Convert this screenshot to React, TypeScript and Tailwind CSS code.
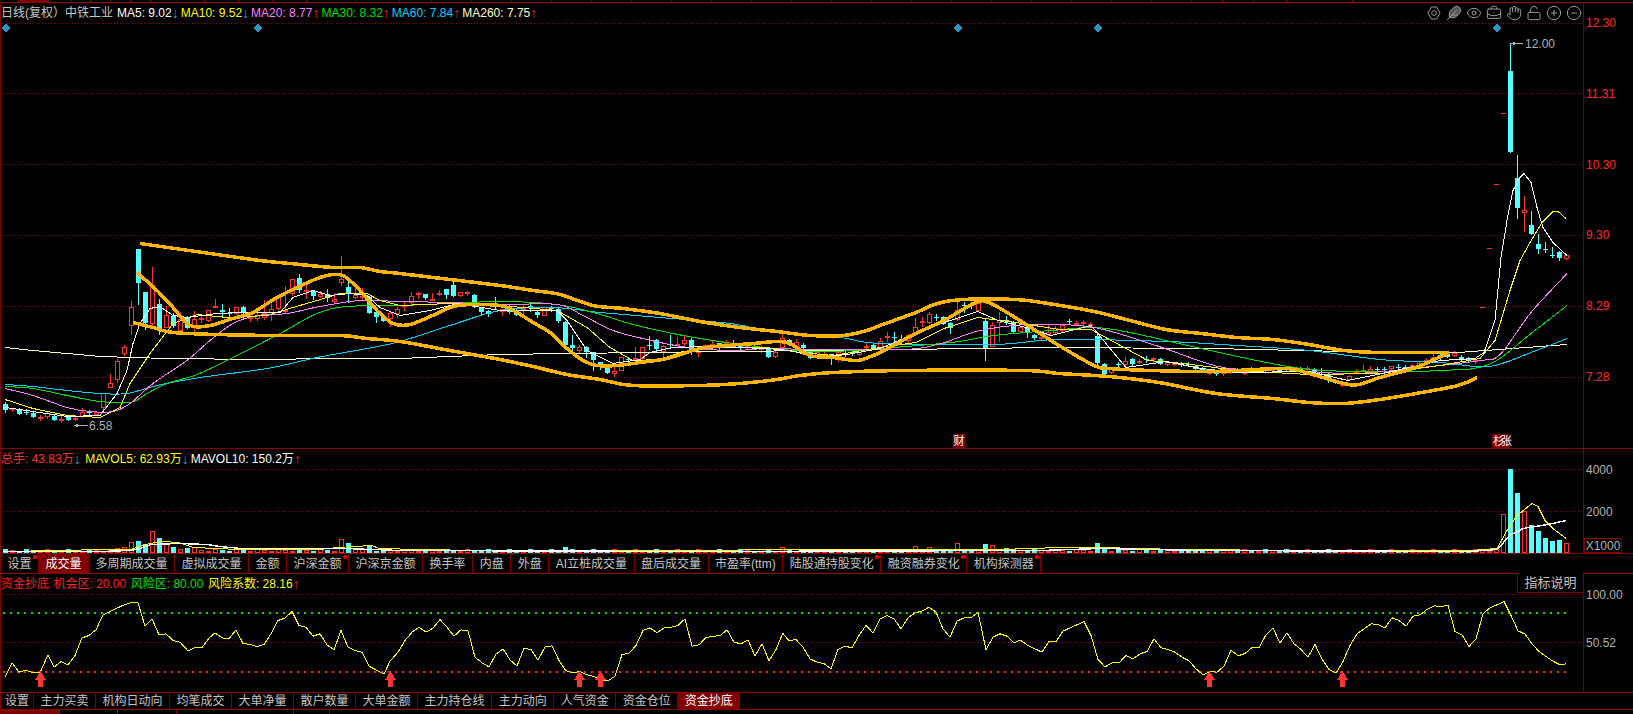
import { Feather, Eye, BriefcaseBusiness, Hand, LockOpen, CirclePlus, CircleMinus } from "lucide-react";

const W = 1582;
const GOLD = "#ffb400";
const RED = "#ff3232";
const CYAN = "#54ffff";
const DOT = "#8a0000";

// [index, body top, body bottom, high, low, up?]
const CANDLES: number[][] = [
  [0,404,410,402,413,0],[1,408,410,408,412,1],[2,409,414,408,415,0],[3,412,413,409,415,0],[4,413,417,412,418,0],
  [5,417,419,415,421,1],[6,413,417,412,419,1],[7,416,420,415,421,0],[8,419,420,416,423,1],[9,417,420,416,421,0],
  [10,418,420,415,421,1],[11,412,417,408,418,1],[12,412,413,410,416,0],[13,412,415,412,416,1],[14,393,408,393,410,1],
  [15,383,388,374,388,1],[16,361,380,359,383,1],[17,347,354,345,356,1],[18,307,326,301,335,1],[19,249,283,249,305,0],
  [20,292,323,292,330,0],[21,285,324,267,328,1],[22,304,328,299,335,0],[23,315,328,306,328,1],[24,316,326,313,328,0],
  [25,319,331,312,331,1],[26,317,328,316,329,0],[27,319,328,311,335,1],[28,318,320,314,323,1],[29,310,321,310,322,1],
  [30,306,308,299,308,1],[31,310,312,304,317,0],[32,313,314,308,317,0],[33,307,314,307,315,1],[34,307,313,306,315,0],
  [35,317,319,314,322,1],[36,315,319,313,321,1],[37,313,318,300,320,1],[38,309,313,303,321,1],[39,297,309,296,310,1],
  [40,310,311,286,313,1],[41,279,294,279,296,1],[42,278,290,274,293,0],[43,290,291,285,299,1],[44,291,296,290,300,0],
  [45,294,297,291,298,1],[46,294,298,289,302,0],[47,299,302,293,303,1],[48,279,283,256,286,1],[49,287,293,282,303,0],
  [50,295,298,288,299,1],[51,296,297,288,300,1],[52,297,313,296,314,0],[53,312,317,311,323,0],[54,317,321,316,322,0],
  [55,313,319,312,327,1],[56,309,314,307,318,1],[57,305,307,302,311,1],[58,296,303,292,305,1],[59,293,294,292,299,1],
  [60,294,298,294,300,0],[61,299,300,293,301,1],[62,293,294,290,296,1],[63,289,295,289,299,0],[64,285,296,281,297,0],
  [65,292,296,292,297,1],[66,292,293,291,296,1],[67,295,307,294,308,0],[68,308,312,307,315,0],[69,311,314,310,317,0],
  [70,304,305,297,310,0],[71,309,312,309,316,1],[72,309,312,304,314,0],[73,310,315,308,316,0],[74,308,310,305,314,1],
  [75,306,307,304,312,0],[76,312,315,310,318,0],[77,307,316,307,316,1],[78,308,309,306,312,0],[79,309,321,307,323,0],
  [80,322,345,321,349,0],[81,345,348,335,355,0],[82,347,351,345,353,1],[83,347,352,346,358,0],[84,352,360,352,371,0],
  [85,362,365,362,370,0],[86,365,373,365,374,0],[87,371,374,367,377,1],[88,357,371,357,371,1],[89,359,360,358,362,0],
  [90,358,359,347,362,1],[91,347,359,347,362,1],[92,345,346,336,350,0],[93,340,349,339,351,0],[94,346,352,345,357,1],
  [95,344,345,335,348,0],[96,344,345,337,345,1],[97,340,344,335,347,1],[98,340,351,338,355,0],[99,351,352,348,357,1],
  [100,345,348,344,349,1],[101,344,346,340,350,1],[102,343,346,343,352,0],[103,342,344,340,348,1],[104,343,345,340,348,0],
  [105,346,347,345,350,0],[106,345,347,343,349,1],[107,346,349,345,350,0],[108,347,350,345,353,1],[109,348,357,347,358,0],
  [110,352,357,351,358,1],[111,338,348,333,350,1],[112,340,345,339,346,0],[113,342,348,339,350,1],[114,345,348,343,351,0],
  [115,349,358,349,359,0],[116,352,357,351,358,1],[117,355,358,352,359,1],[118,354,359,354,365,0],[119,352,357,352,362,1],
  [120,353,354,350,357,0],[121,352,353,350,356,0],[122,350,355,349,356,1],[123,346,348,343,349,1],[124,345,348,344,349,0],
  [125,341,348,338,350,1],[126,336,337,332,342,1],[127,337,338,332,342,0],[128,339,341,335,344,0],[129,335,341,334,343,1],
  [130,327,333,318,334,1],[131,321,322,317,327,1],[132,314,323,312,324,1],[133,317,318,314,321,0],[134,317,324,316,325,0],
  [135,323,328,322,334,0],[136,310,320,302,321,1],[137,305,306,302,313,0],[138,305,306,302,309,0],[139,303,311,303,312,1],
  [140,321,348,318,361,0],[141,325,347,322,347,1],[142,320,323,312,342,1],[143,320,321,316,325,0],[144,322,332,321,333,0],
  [145,327,332,326,333,1],[146,328,333,327,338,0],[147,335,338,334,340,0],[148,337,338,334,341,1],[149,332,335,325,336,1],
  [150,328,333,326,334,1],[151,325,331,324,332,1],[152,321,322,319,325,0],[153,323,324,321,326,1],[154,322,323,320,326,1],
  [155,324,325,322,327,1],[156,336,363,333,368,0],[157,364,374,363,375,0],[158,369,373,368,374,1],[159,364,365,362,367,0],
  [160,361,365,357,366,1],[161,359,364,358,367,0],[162,361,362,359,364,1],[163,359,360,356,363,0],[164,358,359,357,363,1],
  [165,359,364,358,365,0],[166,362,365,361,366,1],[167,363,365,362,366,1],[168,364,365,362,367,0],[169,364,365,362,367,0],
  [170,366,369,365,370,0],[171,368,370,367,372,0],[172,371,374,370,375,1],[173,373,374,371,376,0],[174,372,373,370,376,1],
  [175,370,373,369,374,1],[176,370,372,368,373,0],[177,371,374,370,375,1],[178,369,370,367,372,0],[179,370,371,368,373,1],
  [180,369,370,367,373,0],[181,369,371,367,372,1],[182,370,371,368,372,0],[183,369,370,367,372,0],[184,368,370,367,372,1],
  [185,369,370,367,371,0],[186,368,369,366,371,1],[187,369,371,368,373,0],[188,370,371,368,374,0],[189,374,380,373,383,0],
  [190,380,383,379,384,0],[191,383,386,382,387,1],[192,376,380,375,381,1],[193,372,373,369,374,1],[194,370,371,365,372,1],
  [195,369,372,366,372,1],[196,369,370,367,373,0],[197,369,370,367,372,0],[198,366,369,366,371,1],[199,367,368,364,371,0],
  [200,367,368,365,370,0],[201,365,368,364,369,1],[202,363,366,362,367,1],[203,360,362,358,364,1],[204,357,358,354,362,1],
  [205,355,356,353,360,0],[206,354,357,352,358,0],[207,353,356,351,357,1],[208,357,360,355,361,0],[209,359,361,357,363,0],
  [210,360,362,358,364,1],[211,307,307,307,307,1],[212,248,248,248,248,1],[213,184,184,184,184,1],[214,113,113,113,113,1],
  [215,71,152,43,153,0],[216,178,208,155,219,0],[217,210,213,196,232,1],[218,225,234,211,235,0],[219,244,249,234,254,0],
  [220,249,250,242,253,0],[221,255,256,247,258,0],[222,252,258,251,261,0],[223,255,259,254,260,1],
];

const UPPER = [140,243, 203,252, 260,260, 290,263, 333,267, 360,267, 380,271, 400,273, 450,279, 500,285, 533,290, 560,294, 593,305, 623,308, 660,313, 700,321, 740,327, 777,331, 810,335, 843,335, 867,330, 880,325, 916,312, 937,303, 962,299, 1016,299, 1048,303, 1094,311, 1130,320, 1166,329, 1201,333, 1237,337, 1273,339, 1309,344, 1344,350, 1380,352, 1449,352];
const MIDDLE = [137,272, 157,290, 173,307, 190,325, 210,325, 233,318, 253,312, 277,297, 310,281, 327,275, 343,275, 360,290, 377,310, 393,323, 410,324, 435,314, 458,305, 500,305, 517,312, 533,322, 550,332, 567,348, 583,360, 597,365, 617,365, 640,362, 667,358, 700,348, 727,345, 753,343, 777,341, 790,343, 810,355, 833,357, 857,360, 873,355, 880,352, 916,333, 944,320, 976,302, 991,303, 1023,322, 1059,345, 1094,365, 1109,368, 1151,370, 1212,371, 1284,368, 1309,373, 1344,383, 1359,384, 1380,377, 1416,367, 1449,352];
const LOWER = [133,322, 153,327, 173,332, 217,334, 277,335, 340,335, 367,338, 400,341, 450,350, 500,359, 533,366, 567,374, 600,379, 633,385, 700,385, 740,383, 777,379, 800,375, 833,372, 900,370, 1023,370, 1059,373, 1109,376, 1159,382, 1216,393, 1273,398, 1309,402, 1344,403, 1380,399, 1416,393, 1458,385, 1477,377];

const MA5 = [5,407, 33,411, 67,416, 100,415, 117,393, 127,370, 133,343, 140,323, 150,308, 160,306, 173,315, 187,317, 217,313, 240,312, 280,312, 293,297, 313,290, 330,295, 350,293, 367,295, 380,307, 400,315, 430,310, 458,303, 500,310, 557,310, 567,320, 587,350, 613,363, 640,359, 650,352, 673,347, 707,346, 767,348, 790,350, 817,357, 847,354, 880,348, 916,333, 944,322, 978,311, 998,320, 1030,328, 1051,335, 1091,325, 1126,367, 1166,361, 1201,368, 1237,372, 1309,371, 1348,380, 1387,372, 1440,360, 1475,358, 1484,352, 1495,320, 1501,257, 1507,220, 1513,190, 1520,177, 1524,173, 1531,182, 1537,207, 1543,227, 1553,242, 1567,255];
const MA10 = [5,399, 33,408, 67,415, 100,417, 120,407, 130,383, 150,353, 173,323, 197,314, 227,317, 267,315, 293,307, 317,300, 340,293, 367,293, 380,300, 400,305, 450,303, 500,305, 557,310, 587,327, 610,347, 633,360, 660,359, 683,351, 717,347, 767,347, 800,352, 833,355, 880,347, 916,342, 944,328, 978,317, 1016,322, 1059,329, 1091,329, 1148,360, 1184,363, 1237,370, 1309,374, 1380,373, 1440,365, 1480,358, 1495,340, 1510,290, 1520,260, 1530,242, 1542,222, 1553,211, 1558,211, 1566,218];
const MA20 = [5,388, 33,395, 67,407, 90,411, 113,411, 130,403, 153,383, 187,360, 210,340, 233,323, 257,315, 287,313, 320,306, 360,300, 400,301, 450,302, 500,304, 557,304, 583,315, 613,330, 647,339, 687,347, 733,350, 767,348, 813,349, 905,349, 941,343, 980,330, 1030,324, 1094,327, 1159,346, 1223,367, 1284,369, 1355,373, 1440,365, 1480,360, 1500,354, 1531,312, 1567,273];
const MA30 = [5,386, 33,388, 67,395, 100,401, 130,402, 147,393, 167,383, 197,374, 233,357, 280,333, 317,313, 347,306, 400,305, 450,303, 500,301, 557,304, 597,313, 633,324, 683,335, 733,343, 793,350, 833,351, 880,348, 951,342, 994,335, 1051,330, 1094,327, 1130,332, 1201,348, 1301,368, 1380,371, 1440,370, 1489,364, 1531,333, 1567,305];
const MA60 = [5,384, 33,386, 67,390, 100,393, 127,393, 157,385, 200,377, 267,368, 317,357, 367,348, 400,341, 450,325, 500,310, 553,307, 600,312, 660,317, 730,323, 777,332, 840,337, 880,343, 994,344, 1059,339, 1166,341, 1237,345, 1309,350, 1380,359, 1440,362, 1489,366, 1531,352, 1567,338];
const MA260 = [5,347, 33,350, 67,353, 100,356, 167,358, 260,359, 333,358, 400,358, 500,354, 567,353, 733,351, 900,349, 1051,347, 1212,348, 1344,351, 1458,352, 1567,344];

// risk curve, read off the chart as x*2 / (y-575)*3
const RISK_A = [10,305, 24,262, 38,290, 52,284, 66,292, 80,292, 96,238, 108,275, 122,258, 136,268, 150,240, 164,187, 178,180, 192,163, 206,118, 220,108, 234,98, 248,88, 262,82, 276,82, 290,152, 304,130, 318,178, 332,175, 346,195, 360,200, 376,226, 390,216, 404,216, 418,188, 430,172, 444,187, 458,190, 472,163, 486,204, 500,207, 514,213, 528,207, 542,175, 556,135, 570,128, 584,108, 598,150, 612,155, 626,182, 640,175, 654,208, 668,223, 682,165, 696,215, 710,225, 724,230, 738,272, 752,283, 768,296, 780,257, 796,230, 810,195, 824,170, 838,155, 852,170, 866,158, 880,132, 894,155, 908,182, 922,163, 936,166, 950,245, 964,262, 978,274, 992,236, 1006,220, 1020,253, 1034,272, 1048,218, 1062,222, 1076,254, 1090,214, 1104,211, 1118,255, 1132,286, 1146,292, 1160,288, 1174,298, 1188,303, 1202,313, 1216,316, 1230,302, 1244,237, 1258,233, 1272,210, 1286,165, 1300,157, 1314,172, 1328,157, 1342,155, 1356,150, 1370,130, 1384,212, 1398,208, 1412,186, 1426,182, 1440,181, 1454,163, 1468,200, 1482,205, 1496,193, 1510,242, 1524,205, 1538,256, 1552,222, 1566,172];
const RISK_B = [0,178, 10,196, 24,192, 38,215, 52,250, 66,260, 80,264, 94,280, 108,222, 122,212, 136,217, 150,180, 164,150, 178,172, 192,130, 206,120, 220,130, 234,160, 248,127, 262,112, 276,107, 290,95, 304,110, 318,160, 332,185, 346,137, 360,127, 374,127, 388,110, 404,223, 418,185, 432,175, 446,182, 460,203, 472,193, 488,210, 502,220, 516,230, 530,198, 544,198, 558,167, 572,157, 586,148, 600,138, 614,180, 628,252, 642,274, 656,262, 670,262, 684,240, 698,250, 712,235, 726,228, 740,190, 754,217, 768,222, 782,230, 796,245, 810,256, 824,280, 838,298, 852,288, 866,290, 880,272, 894,224, 908,241, 922,234, 936,216, 950,216, 964,178, 978,157, 992,203, 1006,172, 1020,205, 1034,222, 1048,245, 1062,207, 1076,250, 1090,282, 1104,293, 1118,258, 1132,210, 1146,175, 1160,160, 1174,145, 1188,147, 1202,157, 1216,127, 1230,135, 1244,152, 1258,122, 1272,118, 1286,102, 1300,91, 1314,93, 1328,90, 1342,168, 1356,178, 1370,213, 1384,190, 1398,115, 1412,97, 1426,88, 1440,78, 1454,120, 1468,166, 1482,176, 1496,205, 1510,228, 1524,243, 1538,257, 1552,268, 1564,265];

const riskPoints = () => {
  const out: number[] = [];
  for (let k = 0; k < RISK_A.length; k += 2) out.push(RISK_A[k] / 2, RISK_A[k + 1] / 3 + 575);
  for (let k = 0; k < RISK_B.length; k += 2) out.push(RISK_B[k] / 2 + 784, RISK_B[k + 1] / 3 + 575);
  return out;
};

const VOL_TOPS: Record<number, number> = {
  18: 542, 19: 541, 20: 544, 21: 531, 22: 538, 23: 544, 24: 547, 25: 549, 26: 548, 27: 547, 17: 547, 16: 548,
  48: 539, 49: 543, 50: 548, 51: 548, 52: 546, 80: 547, 111: 547, 130: 546, 132: 547, 136: 543, 140: 544, 141: 545, 143: 548,
  156: 543, 157: 547, 210: 549, 214: 514, 215: 469, 216: 493, 217: 511, 218: 525, 219: 531, 220: 538, 221: 541, 222: 540, 223: 543,
};

const candleX = (i: number) => 5 + 7 * i;

// catmull-rom through the points, for the thick bands and slow averages
function smoothPath(pts: number[]) {
  let d = `M${pts[0]},${pts[1]}`;
  for (let k = 0; k < pts.length - 2; k += 2) {
    const x0 = k > 0 ? pts[k - 2] : pts[k];
    const y0 = k > 0 ? pts[k - 1] : pts[k + 1];
    const x1 = pts[k];
    const y1 = pts[k + 1];
    const x2 = pts[k + 2];
    const y2 = pts[k + 3];
    const x3 = k + 4 < pts.length ? pts[k + 4] : x2;
    const y3 = k + 4 < pts.length ? pts[k + 5] : y2;
    d += ` C${x1 + (x2 - x0) / 6},${y1 + (y2 - y0) / 6} ${x2 - (x3 - x1) / 6},${y2 - (y3 - y1) / 6} ${x2},${y2}`;
  }
  return d;
}

function Line({ pts, color, width = 1, smooth = false }: { pts: number[]; color: string; width?: number; smooth?: boolean }) {
  // half-pixel shift keeps flat runs of a 1px aliased line from dropping out
  if (smooth) return <path d={smoothPath(pts)} fill="none" stroke={color} strokeWidth={width} transform="translate(0 0.5)" />;
  const s: string[] = [];
  for (let k = 0; k < pts.length; k += 2) s.push(pts[k] + "," + pts[k + 1]);
  return <polyline points={s.join(" ")} fill="none" stroke={color} strokeWidth={width} transform="translate(0 0.5)" />;
}

function Dotted({ y, color = DOT, dash = "1 2", x2 = 1583, width = 1 }: { y: number; color?: string; dash?: string; x2?: number; width?: number }) {
  return <line x1={3} x2={x2} y1={y + 0.5} y2={y + 0.5} stroke={color} strokeDasharray={dash} strokeWidth={width} />;
}

function Candle({ c }: { c: number[] }) {
  const [i, top, bottom, hi, lo, up] = c;
  const x = candleX(i);
  const color = up ? RED : CYAN;
  if (top === bottom) return <rect x={x - 2} y={top} width={5} height={1} fill={RED} />;
  return (
    <g>
      <rect x={x} y={hi} width={1} height={Math.max(lo - hi, 1)} fill={color} />
      {up ? (
        <rect x={x - 1.5} y={top + 0.5} width={4} height={Math.max(bottom - top - 1, 1)} fill="#000" stroke={color} />
      ) : (
        <rect x={x - 2} y={top} width={5} height={Math.max(bottom - top, 1)} fill={color} />
      )}
    </g>
  );
}

function MainChart() {
  return (
    <svg className="absolute left-0 top-0" width={W} height={445} viewBox="1 3 1582 445" shapeRendering="crispEdges">
      {[23, 93, 164, 235, 306, 377].map((y) => <Dotted key={y} y={y} />)}
      {[6, 258, 958, 1098, 1497].map((x) => (
        <polygon key={x} points={`${x - 4.5},28 ${x},23.5 ${x + 4.5},28 ${x},32.5`} fill="#2f93c0" />
      ))}
      {CANDLES.map((c) => <Candle key={c[0]} c={c} />)}
      <Line pts={MA260} color="#ffffc0" />
      <Line pts={MA60} color="#00d0ff" smooth />
      <Line pts={MA30} color="#00e000" smooth />
      <Line pts={MA20} color="#ff80ff" smooth />
      <Line pts={MA10} color="#ffff00" />
      <Line pts={MA5} color="#ffffff" />
      <Line pts={UPPER} color={GOLD} width={3.5} smooth />
      <Line pts={LOWER} color={GOLD} width={3.5} smooth />
      <Line pts={MIDDLE} color={GOLD} width={3.5} smooth />
      <line x1={1511} x2={1523} y1={43.5} y2={43.5} stroke="#b0b0b0" />
      <polygon points="1511,43.5 1515,41.5 1515,45.5" fill="#b0b0b0" />
      <text x={1525} y={48} fontSize={12} fill="#b0b0b0" fontFamily="'Liberation Sans', sans-serif">12.00</text>
      <line x1={74} x2={88} y1={425.5} y2={425.5} stroke="#b0b0b0" />
      <polygon points="74,425.5 78,423.5 78,427.5" fill="#b0b0b0" />
      <text x={89} y={430} fontSize={12} fill="#b0b0b0" fontFamily="'Liberation Sans', sans-serif">6.58</text>
    </svg>
  );
}

function VolumeChart() {
  return (
    <svg className="absolute left-0 top-0" width={W} height={104} viewBox="1 449 1582 104" shapeRendering="crispEdges">
      <Dotted y={469} />
      <Dotted y={511} />
      {CANDLES.map((c) => {
        const i = c[0];
        const x = candleX(i);
        const top = VOL_TOPS[i] ?? 549 + ((i * 7) % 3);
        return c[5] ? (
          <rect key={i} x={x - 1.5} y={top + 0.5} width={4} height={552 - top} fill="#000" stroke={RED} />
        ) : (
          <rect key={i} x={x - 2} y={top} width={5} height={553 - top} fill={CYAN} />
        );
      })}
      <Line color="#ffff00" pts={[3,551, 60,550, 103,549, 131,549, 145,544, 162,541, 179,542, 193,547, 240,549, 320,549, 337,547, 372,545, 379,548, 420,549, 480,550, 1000,549, 1060,547, 1100,547, 1180,549, 1300,550, 1470,550, 1497,548, 1507,530, 1517,515, 1532,503, 1538,506, 1545,520, 1553,528, 1566,538]} />
      <Line color="#ffffff" pts={[3,551, 100,551, 130,550, 140,548, 151,544, 179,543, 207,544, 220,546, 241,548, 344,548, 400,550, 700,551, 1040,550, 1100,548, 1200,550, 1470,551, 1497,549, 1510,535, 1523,528, 1548,524, 1566,520]} width={1.4} />
    </svg>
  );
}

function RiskChart() {
  const arrows = [40, 390, 579, 600, 1209, 1342];
  return (
    <svg className="absolute left-0 top-0" width={W} height={118} viewBox="1 574 1582 118" shapeRendering="crispEdges">
      <Dotted y={594} />
      <Dotted y={642} />
      <Dotted y={612} color="#00e000" dash="2 5" x2={1568} width={2} />
      <Dotted y={671} color="#ff2020" dash="2 5" x2={1568} width={2} />
      <Line pts={riskPoints()} color="#ffff00" />
      {arrows.map((x) => (
        <polygon key={x} points={`${x + 0.5},671 ${x + 6},680 ${x + 3},680 ${x + 3},687 ${x - 2},687 ${x - 2},680 ${x - 5},680`} fill="#ff3535" />
      ))}
    </svg>
  );
}

function Gear() {
  return (
    <svg width="16" height="16" viewBox="0 0 24 24" fill="none" stroke="#999999" strokeWidth="1.5">
      <path d="M8 3h8l5 9-5 9H8l-5-9z" strokeLinejoin="round" />
      <circle cx="12" cy="12" r="3.5" />
    </svg>
  );
}

function Toolbar() {
  const cls = "w-[16px] h-[16px] text-[#999999]";
  return (
    <div className="flex items-center gap-[4px] pr-[1px]">
      <Gear />
      <Feather className={cls + " fill-[#555555]"} strokeWidth={1.5} />
      <Eye className={cls} strokeWidth={1.5} />
      <BriefcaseBusiness className={cls} strokeWidth={1.5} />
      <Hand className={cls} strokeWidth={1.5} />
      <LockOpen className={cls} strokeWidth={1.5} />
      <CirclePlus className={cls} strokeWidth={1.5} />
      <CircleMinus className={cls} strokeWidth={1.5} />
    </div>
  );
}

function Arrow({ up }: { up: boolean }) {
  return (
    <span className={"inline-block w-[7px] text-center text-[14px] " + (up ? "text-[#e03030]" : "text-[#2fa5c8]")}>
      {up ? "↑" : "↓"}
    </span>
  );
}

function Stat({ label, color, up, className = "" }: { label: string; color: string; up: boolean; className?: string }) {
  return (
    <span className={"flex items-center whitespace-nowrap " + className} style={{ color }}>
      {label}
      <Arrow up={up} />
    </span>
  );
}

const MA_ITEMS = [
  { label: "MA5: 9.02", color: "#ffffff", up: false },
  { label: "MA10: 9.52", color: "#ffff00", up: false },
  { label: "MA20: 8.77", color: "#ff80ff", up: true },
  { label: "MA30: 8.32", color: "#00e000", up: true },
  { label: "MA60: 7.84", color: "#00d0ff", up: true },
  { label: "MA260: 7.75", color: "#ffffc0", up: true },
];

const TABS_VOL = [
  { t: "设置", dot: true },
  { t: "成交量", active: true },
  { t: "多周期成交量" },
  { t: "虚拟成交量" },
  { t: "金额" },
  { t: "沪深金额", dot: true },
  { t: "沪深京金额" },
  { t: "换手率" },
  { t: "内盘" },
  { t: "外盘" },
  { t: "AI立桩成交量" },
  { t: "盘后成交量" },
  { t: "市盈率(ttm)" },
  { t: "陆股通持股变化", dot: true },
  { t: "融资融券变化", dot: true },
  { t: "机构探测器", dot: true },
];

const TABS_RISK = [
  { t: "设置", narrow: true },
  { t: "主力买卖" },
  { t: "机构日动向" },
  { t: "均笔成交" },
  { t: "大单净量" },
  { t: "散户数量" },
  { t: "大单金额" },
  { t: "主力持仓线" },
  { t: "主力动向" },
  { t: "人气资金" },
  { t: "资金仓位" },
  { t: "资金抄底", active: true },
];

type TabItem = { t: string; dot?: boolean; active?: boolean; narrow?: boolean };

function TabBar({ tabs, className }: { tabs: TabItem[]; className: string }) {
  return (
    <div className={"flex bg-black border-y border-[#800000] " + className}>
      {tabs.map((tab) => (
        <div
          key={tab.t}
          className={
            "relative flex items-center border-r border-[#800000] whitespace-nowrap " +
            (tab.narrow ? "px-[4px] " : "px-[6.5px] ") +
            (tab.active ? "bg-[#800000] text-white" : "text-[#c4c4c4]")
          }
        >
          {tab.t}
          {tab.dot ? <span className="absolute right-[1px] top-[1px] w-[4px] h-[4px] rounded-full bg-[#ff0000]" /> : null}
        </div>
      ))}
    </div>
  );
}

function CutTabs({ stops, active, className }: { stops: number[]; active: number; className: string }) {
  return (
    <div className={"flex " + className}>
      {stops.map((w, k) => (
        <div
          key={k}
          style={{ width: w }}
          className={"border-r border-[#800000] " + (k === active ? "bg-[#800000]" : "")}
        />
      ))}
    </div>
  );
}

export default function App() {
  return (
    <div className="w-[1633px] h-[714px] bg-black overflow-hidden flex flex-col text-[12px] leading-none font-['Liberation_Sans','Noto_Sans_CJK_SC',sans-serif]">
      <CutTabs
        className="h-[3px] border-b border-[#800000]"
        active={1}
        stops={[19, 31, 22, 19, 20, 20, 20, 27, 27, 34, 34, 34, 49, 44, 32, 40, 40, 40, 40, 40, 40, 40, 40, 40, 40, 40, 40, 40, 40, 40, 40, 40, 40, 40, 31, 31, 33, 66]}
      />

      <div className="h-[446px] flex border-b border-[#800000] shrink-0">
        <div className="relative w-[1583px] border-l border-[#800000]">
          <MainChart />
          <div className="relative h-[20px] flex items-center justify-between">
            <div className="flex items-center">
              <span className="text-[#c8c8c8] w-[64px] whitespace-nowrap">日线(复权）</span>
              <span className="text-[#c8c8c8] mr-[4px]">中铁工业</span>
              <div className="flex gap-[2px]">
                {MA_ITEMS.map((m) => <Stat key={m.label} {...m} />)}
              </div>
            </div>
            <Toolbar />
          </div>
          <div className="absolute left-[952px] bottom-0 h-[14px] w-[12px] bg-[#800000] text-white text-[11px] flex items-center justify-center">财</div>
          <div className="absolute left-[1491px] bottom-0 h-[14px] w-[18px] bg-[#800000] text-white text-[11px] flex items-center justify-center tracking-[-3px]">杉张</div>
        </div>
        <div className="flex-1 border-l border-[#800000] pl-[2px] pt-[8px] flex flex-col gap-[46.8px] text-[#ff2a2a]">
          {["12.30", "11.31", "10.30", "9.30", "8.29", "7.28"].map((p) => (
            <div key={p} className="h-[24px] flex items-center">{p}</div>
          ))}
        </div>
      </div>

      <div className="h-[104px] flex shrink-0">
        <div className="relative w-[1583px] border-l border-[#800000]">
          <VolumeChart />
          <div className="relative h-[19px] flex items-center gap-[2px]">
            <Stat label="总手: 43.83万" color="#ff3232" up={false} className="mr-[2.5px]" />
            <Stat label="MAVOL5: 62.93万" color="#ffff00" up={false} />
            <Stat label="MAVOL10: 150.2万" color="#ffffff" up={true} />
          </div>
        </div>
        <div className="flex-1 border-l border-[#800000] pt-[13px] flex flex-col text-[#b0b0b0]">
          <div className="h-[16px] pl-[2px] flex items-center">4000</div>
          <div className="h-[16px] pl-[2px] mt-[26px] flex items-center">2000</div>
          <div className="mt-auto w-[38px] h-[15px] border border-[#800000] flex items-center justify-center">X1000</div>
        </div>
      </div>

      <div className="flex shrink-0 h-[21px]">
        <TabBar tabs={TABS_VOL} className="flex-1 border-l" />
      </div>

      <div className="h-[118px] flex shrink-0">
        <div className="relative w-[1583px] border-l border-[#800000]">
          <RiskChart />
          <div className="relative h-[20px] flex items-center gap-[4.5px] whitespace-nowrap">
            <span className="text-[#ff2020]">资金抄底</span>
            <span className="text-[#ff2020]">机会区: 20.00</span>
            <span className="text-[#00e000]">风险区: 80.00</span>
            <span className="flex items-center text-[#ffff00]">风险系数: 28.16<Arrow up /></span>
          </div>
          <div className="absolute right-0 top-[-1px] w-[66px] h-[20px] border-l border-b border-[#800000] bg-black text-[#c0c0c0] text-[13px] flex items-center justify-center">指标说明</div>
        </div>
        <div className="flex-1 border-l border-[#800000] pl-[2px] pt-[13px] flex flex-col gap-[32px] text-[#b0b0b0]">
          <div className="h-[16px] flex items-center">100.00</div>
          <div className="h-[16px] flex items-center">50.52</div>
        </div>
      </div>

      <div className="flex shrink-0 h-[18px]">
        <TabBar tabs={TABS_RISK} className="flex-1 border-l" />
      </div>

      <CutTabs className="h-[4px]" active={0} stops={[60, 58, 59, 117, 36]} />
    </div>
  );
}
